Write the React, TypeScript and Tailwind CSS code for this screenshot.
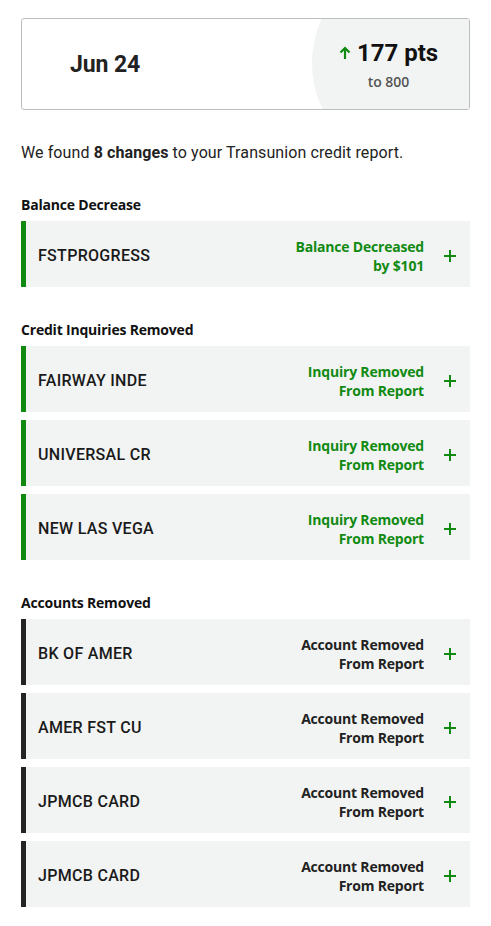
const sections = [
  {
    title: "Balance Decrease",
    tone: "green",
    items: [{ name: "FSTPROGRESS", lines: ["Balance Decreased", "by $101"] }],
  },
  {
    title: "Credit Inquiries Removed",
    tone: "green",
    items: [
      { name: "FAIRWAY INDE", lines: ["Inquiry Removed", "From Report"] },
      { name: "UNIVERSAL CR", lines: ["Inquiry Removed", "From Report"] },
      { name: "NEW LAS VEGA", lines: ["Inquiry Removed", "From Report"] },
    ],
  },
  {
    title: "Accounts Removed",
    tone: "dark",
    items: [
      { name: "BK OF AMER", lines: ["Account Removed", "From Report"] },
      { name: "AMER FST CU", lines: ["Account Removed", "From Report"] },
      { name: "JPMCB CARD", lines: ["Account Removed", "From Report"] },
      { name: "JPMCB CARD", lines: ["Account Removed", "From Report"] },
    ],
  },
];

function Plus() {
  return (
    <svg width="14" height="14" viewBox="0 0 14 14" className="text-[#118a12]">
      <path d="M7 1v12M1 7h12" stroke="currentColor" strokeWidth="2" />
    </svg>
  );
}

export default function App() {
  return (
    <div className="w-[491px] min-h-[926px] bg-white px-[21px] pt-[18px] pb-4 text-[#1f1f1f] font-['Roboto',sans-serif]">
      {/* score card */}
      <div className="relative h-[92px] overflow-hidden rounded-[3px] border border-[#bdbdbd] flex items-center">
        <div className="pl-[48px] mt-[3px] text-[23px] font-bold text-[#222] tracking-[-0.1px]">Jun 24</div>
        <div className="absolute left-[290px] top-[-62px] h-[212px] w-[212px] rounded-full bg-[#f2f4f3]" />
        <div className="relative ml-auto w-[157px] flex flex-col items-center pr-1 mt-[5px]">
          <div className="flex items-center gap-1.5">
            <svg width="12" height="14" viewBox="0 0 12 14" className="text-[#118a12]">
              <path d="M6 13V2M1.5 6.5L6 2l4.5 4.5" stroke="currentColor" strokeWidth="2.2" fill="none" />
            </svg>
            <span className="text-[24px] font-bold text-[#111] leading-none">177 pts</span>
          </div>
          <span className="mt-[6px] text-[14px] font-semibold text-[#555] font-['Open_Sans',sans-serif]">to 800</span>
        </div>
      </div>

      <p className="mt-[31px] text-[16px] text-[#222] tracking-[0.1px]">
        We found <b className="font-bold">8 changes</b> to your Transunion credit report.
      </p>

      {sections.map((s, si) => (
        <div key={si} className={si === 0 ? "mt-[29px]" : "mt-[32px]"}>
          <h3 className="text-[14px] font-bold text-[#111] mb-[6px] font-['Open_Sans',sans-serif] tracking-[-0.2px]">
            {s.title}
          </h3>
          <div className="flex flex-col gap-[8px]">
            {s.items.map((it, i) => (
              <div
                key={i}
                className={`h-[66px] flex items-center bg-[#f2f4f3] border-l-[5px] pl-[12px] pr-[13px] pt-[4px] ${
                  s.tone === "green" ? "border-[#118a12]" : "border-[#242424]"
                }`}
              >
                <span className="text-[16px] font-medium text-[#1a1a1a] tracking-[0.3px]">{it.name}</span>
                <div
                  className={`ml-auto text-right text-[14px] font-bold leading-[19px] font-['Open_Sans',sans-serif] tracking-[-0.2px] ${
                    s.tone === "green" ? "text-[#118a12]" : "text-[#222]"
                  }`}
                >
                  {it.lines.map((l, j) => (
                    <div key={j}>{l}</div>
                  ))}
                </div>
                <div className="ml-[19px]">
                  <Plus />
                </div>
              </div>
            ))}
          </div>
        </div>
      ))}
    </div>
  );
}
